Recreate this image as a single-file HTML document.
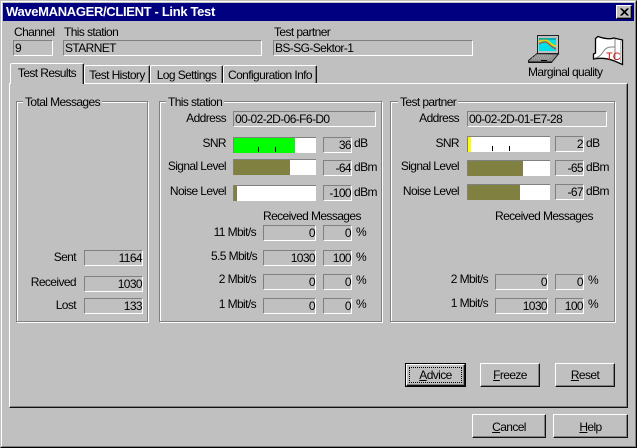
<!DOCTYPE html>
<html><head><meta charset="utf-8"><style>
html,body{margin:0;padding:0;background:#c0c0c0}
body{width:637px;height:448px;position:relative;overflow:hidden;font:12px/13px "Liberation Sans",sans-serif;letter-spacing:-.6px;color:#000}
div,svg{position:absolute;box-sizing:border-box}
.l{white-space:nowrap;height:13px}
.r{white-space:nowrap;text-align:right;height:13px}
.f{border:1px solid;border-color:#808080 #fff #fff #808080;background:#c0c0c0;white-space:nowrap;padding:0 1px;line-height:14px;height:16px}
.n{text-align:right;padding-right:0;line-height:15px}
.b{background:#fff;border-top:1px solid #808080;border-left:1px solid #808080;height:16px;width:83px}
.b i{position:absolute;left:0;top:0;bottom:0;display:block}
.g{border:1px solid #808080;box-shadow:1px 1px 0 #fff,inset 1px 1px 0 #fff}
.cap{background:#c0c0c0;padding:0 2px;white-space:nowrap;height:13px}
.btn{border:1px solid;border-color:#fff #111 #111 #fff;box-shadow:inset -1px -1px 0 #808080;text-align:center;line-height:22px;white-space:nowrap}
.tab{border:1px solid;border-color:#fff #111 transparent #fff;border-bottom:0;box-shadow:inset -1px 0 0 #808080;border-radius:2px 2px 0 0;text-align:center;background:#c0c0c0;white-space:nowrap}
u{text-decoration:underline}
</style></head><body>
<div style="left:0;top:0;width:637px;height:448px;border:1px solid;border-color:#c0c0c0 #000 #000 #c0c0c0"></div>
<div style="left:1px;top:1px;width:635px;height:446px;border:1px solid;border-color:#fff #808080 #808080 #fff"></div>
<div style="left:3px;top:3px;width:631px;height:18px;background:#000080"></div>
<div class="l" style="left:6px;top:5px;color:#fff;font-weight:bold;font-size:13px;letter-spacing:-.33px">WaveMANAGER/CLIENT - Link Test</div>
<div style="left:616px;top:5px;width:16px;height:14px;background:#c0c0c0;border:1px solid;border-color:#fff #000 #000 #fff;box-shadow:inset -1px -1px 0 #808080"></div>
<svg style="left:616px;top:5px" width="16" height="14"><path d="M4.5 3.5L11.5 10.5M5.5 3.5L12.5 10.5M11.5 3.5L4.5 10.5M12.5 3.5L5.5 10.5" stroke="#000" fill="none"/></svg>

<div class="l" style="left:14px;top:26px">Channel</div>
<div class="f" style="left:13px;top:40px;width:40px">9</div>
<div class="l" style="left:64px;top:26px">This station</div>
<div class="f" style="left:63px;top:40px;width:199px">STARNET</div>
<div class="l" style="left:274px;top:26px">Test partner</div>
<div class="f" style="left:273px;top:40px;width:200px">BS-SG-Sektor-1</div>

<svg style="left:527px;top:33px" width="36" height="32" viewBox="0 0 36 32">
<path d="M10.5 2.5H31.5V20.5H10.5Z" fill="#c0c0c0" stroke="#222"/>
<rect x="12" y="5" width="17" height="13" fill="#00e0e8"/>
<path d="M12 9Q18 5 22 9T29 13" stroke="#e8d000" stroke-width="2" fill="none"/>
<path d="M12 11Q18 7 22 11T29 16" stroke="#d03030" fill="none"/>
<path d="M12 6H29" stroke="#008080"/>
<path d="M10 20.5L1.5 27.5V29.5H24.5L31.5 21Z" fill="#909090" stroke="#222"/>
<path d="M8 23H26M5 25H22" stroke="#c0c0c0" stroke-dasharray="1 1"/>
<path d="M2 29H25" stroke="#000"/>
<rect x="14" y="27" width="6" height="1" fill="#000"/>
</svg>

<svg style="left:590px;top:34px" width="36" height="32" viewBox="0 0 36 32">
<path d="M5.5 4.5L8 2.5Q18 6 24 4L32.5 6V30.5L24.5 27Q14 23 3.5 25V20L5.5 19Z" fill="#fff" stroke="#000" stroke-width="1.3"/>
<path d="M5 24Q10 23 13 18T21 13H25" stroke="#808080" fill="none"/>
<path d="M25 5V26" stroke="#808080"/>
<path d="M30.5 7V28" stroke="#c0c0c0"/>
<text x="16" y="26" font-family="Liberation Sans,sans-serif" font-size="11" fill="#d01010" letter-spacing="0">TC</text>
</svg>
<div class="l" style="left:528px;top:66px">Marginal quality</div>

<!-- tabs -->
<div style="left:9px;top:83px;width:619px;height:325px;border:1px solid;border-color:#fff #111 #111 #fff;box-shadow:inset -1px -1px 0 #808080;background:#c0c0c0"></div>
<div class="tab" style="left:84px;top:65px;width:66px;height:18px;line-height:19px">Test History</div>
<div class="tab" style="left:150px;top:65px;width:73px;height:18px;line-height:19px">Log Settings</div>
<div class="tab" style="left:223px;top:65px;width:94px;height:18px;line-height:19px">Configuration Info</div>
<div class="tab" style="left:10px;top:63px;width:74px;height:21px;line-height:18px">Test Results</div>

<!-- total -->
<div class="g" style="left:16px;top:101px;width:132px;height:221px"></div>
<div class="cap" style="left:23px;top:96px">Total Messages</div>
<div class="r" style="left:20px;width:56px;top:251px">Sent</div>
<div class="f n" style="left:84px;top:250px;width:59px">1164</div>
<div class="r" style="left:20px;width:56px;top:276px">Received</div>
<div class="f n" style="left:84px;top:276px;width:59px">1030</div>
<div class="r" style="left:20px;width:56px;top:299px">Lost</div>
<div class="f n" style="left:84px;top:298px;width:59px">133</div>

<!-- this station -->
<div class="g" style="left:159px;top:101px;width:223px;height:221px"></div>
<div class="cap" style="left:166px;top:96px">This station</div>
<div class="r" style="left:170px;width:56px;top:112px">Address</div>
<div class="f" style="left:233px;top:111px;width:143px">00-02-2D-06-F6-D0</div>
<div class="r" style="left:170px;width:56px;top:137px">SNR</div>
<div class="b" style="left:233px;top:137px"><i style="width:61px;background:#00ff00"></i></div>
<div style="left:258px;top:147px;width:1px;height:5px;background:#000"></div>
<div style="left:275px;top:147px;width:1px;height:5px;background:#000"></div>
<div class="f n" style="left:323px;top:137px;width:29px">36</div>
<div class="l" style="left:354px;top:137px">dB</div>
<div class="r" style="left:160px;width:66px;top:160px">Signal Level</div>
<div class="b" style="left:233px;top:159px"><i style="width:56px;background:#808040"></i></div>
<div class="f n" style="left:323px;top:160px;width:29px">-64</div>
<div class="l" style="left:354px;top:161px">dBm</div>
<div class="r" style="left:160px;width:66px;top:185px">Noise Level</div>
<div class="b" style="left:233px;top:185px"><i style="width:3px;background:#808040"></i></div>
<div class="f n" style="left:323px;top:185px;width:29px">-100</div>
<div class="l" style="left:354px;top:186px">dBm</div>
<div class="l" style="left:263px;top:210px">Received Messages</div>

<div class="r" style="left:190px;width:66px;top:226px">11 Mbit/s</div>
<div class="f n" style="left:263px;top:225px;width:53px">0</div>
<div class="f n" style="left:323px;top:225px;width:29px">0</div>
<div class="l" style="left:356px;top:226px">%</div>
<div class="r" style="left:190px;width:67px;top:250px">5.5 Mbit/s</div>
<div class="f n" style="left:263px;top:250px;width:53px">1030</div>
<div class="f n" style="left:323px;top:250px;width:29px">100</div>
<div class="l" style="left:356px;top:251px">%</div>
<div class="r" style="left:190px;width:66px;top:273px">2 Mbit/s</div>
<div class="f n" style="left:263px;top:274px;width:53px">0</div>
<div class="f n" style="left:323px;top:274px;width:29px">0</div>
<div class="l" style="left:356px;top:274px">%</div>
<div class="r" style="left:190px;width:66px;top:298px">1 Mbit/s</div>
<div class="f n" style="left:263px;top:298px;width:53px">0</div>
<div class="f n" style="left:323px;top:298px;width:29px">0</div>
<div class="l" style="left:356px;top:298px">%</div>

<!-- test partner -->
<div class="g" style="left:390px;top:101px;width:225px;height:221px"></div>
<div class="cap" style="left:398px;top:96px">Test partner</div>
<div class="r" style="left:403px;width:56px;top:112px">Address</div>
<div class="f" style="left:467px;top:111px;width:140px">00-02-2D-01-E7-28</div>
<div class="r" style="left:403px;width:56px;top:137px">SNR</div>
<div class="b" style="left:467px;top:136px"><i style="width:3px;background:#ffff00"></i></div>
<div style="left:492px;top:146px;width:1px;height:5px;background:#000"></div>
<div style="left:509px;top:146px;width:1px;height:5px;background:#000"></div>
<div class="f n" style="left:555px;top:136px;width:29px">2</div>
<div class="l" style="left:586px;top:137px">dB</div>
<div class="r" style="left:393px;width:66px;top:160px">Signal Level</div>
<div class="b" style="left:467px;top:160px"><i style="width:55px;background:#808040"></i></div>
<div class="f n" style="left:555px;top:160px;width:29px">-65</div>
<div class="l" style="left:586px;top:161px">dBm</div>
<div class="r" style="left:393px;width:66px;top:185px">Noise Level</div>
<div class="b" style="left:467px;top:184px"><i style="width:52px;background:#808040"></i></div>
<div class="f n" style="left:555px;top:184px;width:29px">-67</div>
<div class="l" style="left:586px;top:185px">dBm</div>
<div class="l" style="left:495px;top:210px">Received Messages</div>
<div class="r" style="left:420px;width:68px;top:273px">2 Mbit/s</div>
<div class="f n" style="left:495px;top:274px;width:53px">0</div>
<div class="f n" style="left:555px;top:274px;width:29px">0</div>
<div class="l" style="left:588px;top:274px">%</div>
<div class="r" style="left:420px;width:68px;top:297px">1 Mbit/s</div>
<div class="f n" style="left:495px;top:298px;width:53px">1030</div>
<div class="f n" style="left:555px;top:298px;width:29px">100</div>
<div class="l" style="left:588px;top:298px">%</div>

<!-- buttons -->
<div style="left:405px;top:363px;width:61px;height:24px;border:1px solid #000"></div>
<div class="btn" style="left:406px;top:364px;width:59px;height:22px;line-height:20px"><u>A</u>dvice</div>
<div style="left:409px;top:367px;width:53px;height:16px;border:1px dotted #000"></div>
<div class="btn" style="left:480px;top:363px;width:60px;height:24px"><u>F</u>reeze</div>
<div class="btn" style="left:555px;top:363px;width:60px;height:24px"><u>R</u>eset</div>
<div class="btn" style="left:472px;top:414px;width:74px;height:24px;line-height:24px"><u>C</u>ancel</div>
<div class="btn" style="left:553px;top:414px;width:75px;height:24px;line-height:24px"><u>H</u>elp</div>
</body></html>
